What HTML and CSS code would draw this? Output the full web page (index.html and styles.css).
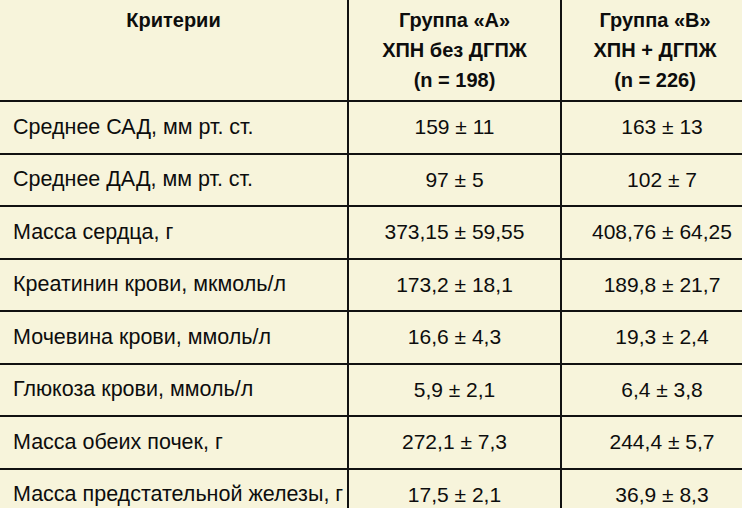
FILE: index.html
```html
<!DOCTYPE html>
<html lang="ru">
<head>
<meta charset="utf-8">
<link rel="stylesheet" href="styles.css">
</head>
<body>
<table class="data">
  <thead>
    <tr class="head">
      <th class="c1"><div class="htext">Критерии</div></th>
      <th class="c2"><div class="htext">Группа «А»<br>ХПН без ДГПЖ<br>(n = 198)</div></th>
      <th class="c3"><div class="htext">Группа «В»<br>ХПН + ДГПЖ<br>(n = 226)</div></th>
    </tr>
  </thead>
  <tbody>
    <tr><td class="c1">Среднее САД, мм рт. ст.</td><td class="c2">159 ± 11</td><td class="c3">163 ± 13</td></tr>
    <tr><td class="c1">Среднее ДАД, мм рт. ст.</td><td class="c2">97 ± 5</td><td class="c3">102 ± 7</td></tr>
    <tr><td class="c1">Масса сердца, г</td><td class="c2">373,15 ± 59,55</td><td class="c3">408,76 ± 64,25</td></tr>
    <tr><td class="c1">Креатинин крови, мкмоль/л</td><td class="c2">173,2 ± 18,1</td><td class="c3">189,8 ± 21,7</td></tr>
    <tr><td class="c1">Мочевина крови, ммоль/л</td><td class="c2">16,6 ± 4,3</td><td class="c3">19,3 ± 2,4</td></tr>
    <tr><td class="c1">Глюкоза крови, ммоль/л</td><td class="c2">5,9 ± 2,1</td><td class="c3">6,4 ± 3,8</td></tr>
    <tr><td class="c1">Масса обеих почек, г</td><td class="c2">272,1 ± 7,3</td><td class="c3">244,4 ± 5,7</td></tr>
    <tr><td class="c1">Масса предстательной железы, г</td><td class="c2">17,5 ± 2,1</td><td class="c3">36,9 ± 8,3</td></tr>
  </tbody>
</table>
</body>
</html>
```
FILE: styles.css
```css
html, body {
  margin: 0;
  padding: 0;
  background: #f7f4db;
  overflow: hidden;
}
body {
  width: 742px;
  height: 508px;
  font-family: "Liberation Sans", Arial, sans-serif;
  color: #0d0d0d;
}
.data {
  border-collapse: separate;
  border-spacing: 0;
  width: 762px;
  table-layout: fixed;
}
.data th, .data td {
  padding: 0;
  border-bottom: 2px solid #111;
  vertical-align: middle;
  white-space: nowrap;
}
.c1 { width: 347px; border-right: 2px solid #111; }
.c2 { width: 211px; border-right: 2px solid #111; text-align: center; }
.c3 { text-align: center; }
.head th {
  height: 100px;
  vertical-align: top;
  font-weight: bold;
  font-size: 20px;
  line-height: 30px;
}
.head th.c3 { padding-right: 14px; }
.htext { padding-top: 5px; }
.data td {
  height: 50.5px;
  font-size: 21px;
}
.data td.c1 {
  padding-left: 13px;
  font-size: 21.5px;
}
```
